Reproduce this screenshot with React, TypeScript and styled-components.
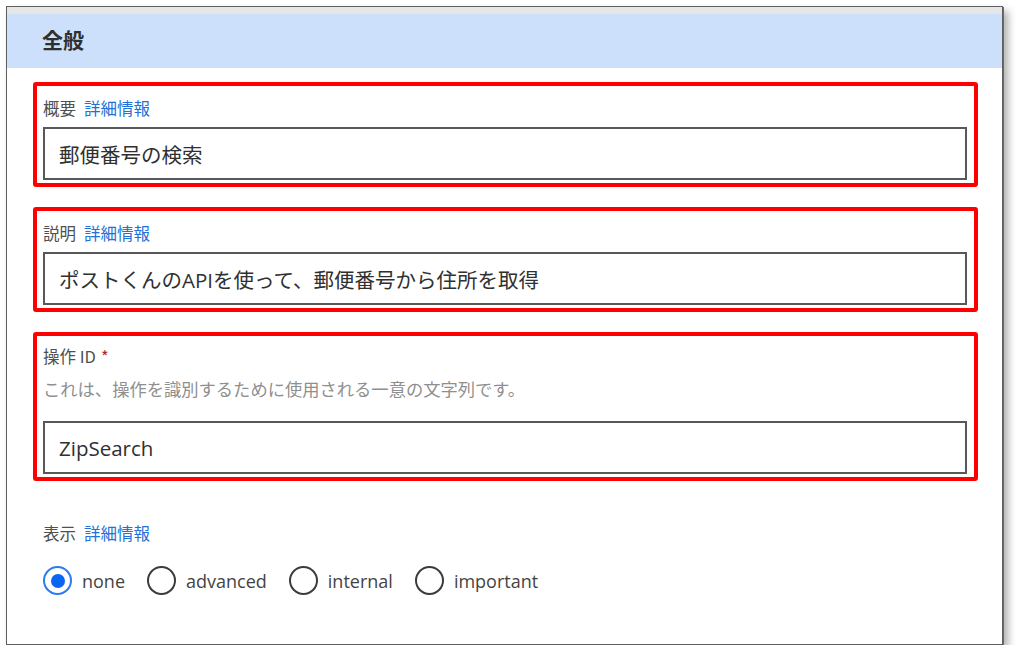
import React from "react";
import styled, { createGlobalStyle } from "styled-components";

const GlobalStyle = createGlobalStyle`
    body {
        margin: 0;
        background: #ffffff;
        font-family: "Open Sans", "Noto Sans CJK JP", sans-serif;
    }
`;

const Frame = styled.div`
    box-sizing: border-box;
    width: 997px;
    height: 639px;
    margin: 6px 0 0 6px;
    border: 1px solid #5f5f5f;
    box-shadow: 1px 1px 0 #6a6a6a, 5px 5px 8px rgba(0, 0, 0, 0.32);
    background: #ffffff;
    display: flex;
    flex-direction: column;
`;

const TitleStrip = styled.div`
    height: 7px;
    background: #e6e6e6;
`;

const Header = styled.div`
    box-sizing: border-box;
    height: 54px;
    display: flex;
    align-items: center;
    padding: 0 0 4px 35px;
    background: #cde0fb;
    color: #2f2f2f;
    font-family: "Noto Sans CJK JP", sans-serif;
    font-size: 21px;
    font-weight: 700;
`;

const Form = styled.div`
    display: flex;
    flex-direction: column;
    gap: 20px;
    padding: 14px 24px 0 26px;
`;

const FieldBox = styled.div<{ $marked?: boolean; $padTop?: number }>`
    display: flex;
    flex-direction: column;
    border: 4px solid ${(p) => (p.$marked ? "#ff0000" : "transparent")};
    border-radius: 3px;
    padding: ${(p) => p.$padTop ?? 12}px 7px 3px 6px;
`;

const Label = styled.div`
    height: 20px;
    line-height: 20px;
    font-family: "Noto Sans CJK JP", sans-serif;
    font-size: 16.5px;
    color: #505050;
`;

const Link = styled.a`
    margin-left: 8px;
    color: #2271d8;
    text-decoration: none;
`;

const Required = styled.span`
    margin-left: 5px;
    color: #b4262c;
`;

const Description = styled.div`
    margin-top: 13px;
    height: 20px;
    line-height: 20px;
    font-family: "Noto Sans CJK JP", sans-serif;
    font-size: 17.3px;
    color: #8f8f8f;
`;

const Input = styled.input<{ $gap: number }>`
    box-sizing: border-box;
    width: 100%;
    height: 53px;
    margin: ${(p) => p.$gap}px 0 0 0;
    padding: 0 14px;
    border: 2px solid #585858;
    border-radius: 0;
    background: #ffffff;
    color: #303030;
    font-family: "Open Sans", "Noto Sans CJK JP", sans-serif;
    font-size: 20.5px;
    outline: none;
`;

const RadioGroup = styled.div`
    display: flex;
    align-items: center;
    gap: 22px;
    margin-top: 23px;
    padding-bottom: 40px;
`;

const RadioOption = styled.label`
    display: flex;
    align-items: center;
    gap: 10px;
    font-family: "Open Sans", sans-serif;
    font-size: 18px;
    color: #444444;
`;

const RadioCircle = styled.span<{ $checked?: boolean }>`
    box-sizing: border-box;
    width: 29px;
    height: 29px;
    border-radius: 50%;
    border: 2px solid ${(p) => (p.$checked ? "#2b7cf0" : "#3c3c3c")};
    display: flex;
    align-items: center;
    justify-content: center;

    &::after {
        content: "";
        display: ${(p) => (p.$checked ? "block" : "none")};
        width: 14px;
        height: 14px;
        border-radius: 50%;
        background: #0a66f0;
    }
`;

const options = ["none", "advanced", "internal", "important"];

const App: React.FC = () => {
    return (
        <>
            <GlobalStyle />
            <Frame>
                <TitleStrip />
                <Header>全般</Header>
                <Form>
                    <FieldBox $marked>
                        <Label>
                            概要<Link>詳細情報</Link>
                        </Label>
                        <Input $gap={9} readOnly defaultValue="郵便番号の検索" />
                    </FieldBox>
                    <FieldBox $marked>
                        <Label>
                            説明<Link>詳細情報</Link>
                        </Label>
                        <Input $gap={9} readOnly defaultValue="ポストくんのAPIを使って、郵便番号から住所を取得" />
                    </FieldBox>
                    <FieldBox $marked $padTop={10}>
                        <Label>
                            操作 ID<Required>*</Required>
                        </Label>
                        <Description>これは、操作を識別するために使用される一意の文字列です。</Description>
                        <Input $gap={22} readOnly defaultValue="ZipSearch" />
                    </FieldBox>
                    <FieldBox $padTop={18}>
                        <Label>
                            表示<Link>詳細情報</Link>
                        </Label>
                        <RadioGroup>
                            {options.map((o, i) => (
                                <RadioOption key={o}>
                                    <RadioCircle $checked={i === 0} />
                                    {o}
                                </RadioOption>
                            ))}
                        </RadioGroup>
                    </FieldBox>
                </Form>
            </Frame>
        </>
    );
};

export default App;
